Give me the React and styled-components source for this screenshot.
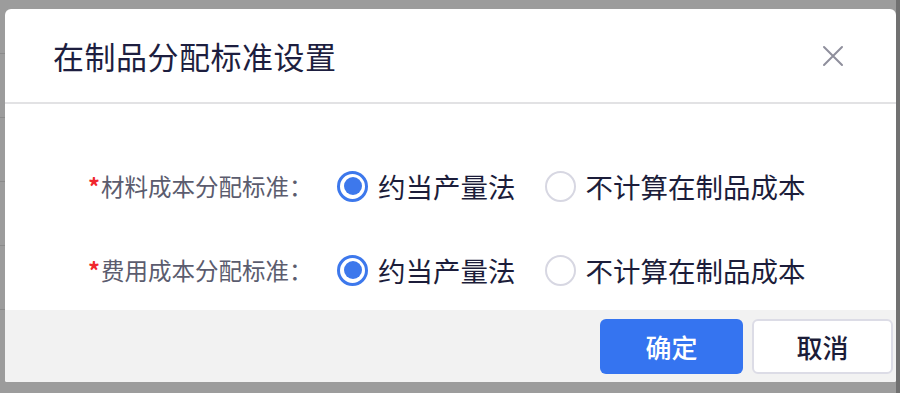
import React, { useState } from 'react'
import styled, { createGlobalStyle } from 'styled-components'

const GlobalStyle = createGlobalStyle`
  html, body {
    margin: 0;
    padding: 0;
  }
  body {
    font-family: "Noto Sans CJK SC", "Noto Sans", sans-serif;
  }
`;

const Page = styled.div`
  position: relative;
  width: 900px;
  height: 393px;
  overflow: hidden;
  display: flex;
  background: #9c9c9c;
`;

const Backdrop = styled.div`
  flex: 1;
  padding-top: 53px;
  display: flex;
  flex-direction: column;
`;

const BackRow = styled.div`
  height: 63px;
  border-top: 1px solid #8b8b8b;
`;

const ScrollStrip = styled.div`
  width: 4px;
  background: #717171;
`;

const Modal = styled.div`
  position: absolute;
  left: 5px;
  top: 9px;
  width: 891px;
  height: 373px;
  background: #fff;
  border-radius: 6px 6px 2px 2px;
  display: flex;
  flex-direction: column;
  overflow: hidden;
`;

const Header = styled.div`
  height: 93px;
  padding: 0 52px 0 48px;
  display: flex;
  align-items: center;
  justify-content: space-between;
  border-bottom: 2px solid #e2e2e4;
`;

const Title = styled.h2`
  margin: 0;
  font-size: 31px;
  font-weight: 400;
  color: #1d1e3f;
  letter-spacing: 0.5px;
`;

const CloseButton = styled.button`
  width: 22px;
  height: 22px;
  padding: 0;
  border: none;
  background: none;
  cursor: pointer;
  display: flex;
  align-items: center;
  justify-content: center;
`;

const Body = styled.div`
  flex: 1;
  padding: 62px 0 0 83px;
  display: flex;
  flex-direction: column;
  gap: 44px;
`;

const FormRow = styled.div`
  height: 40px;
  display: flex;
  align-items: center;
`;

const Label = styled.label`
  width: 249px;
  font-size: 23.5px;
  color: #5b5c6e;
  white-space: nowrap;
`;

const Required = styled.span`
  color: #f0262d;
  font-weight: 700;
  margin-right: 1px;
`;

const RadioGroup = styled.div`
  display: flex;
  align-items: center;
  gap: 29px;
`;

const RadioOption = styled.div`
  display: flex;
  align-items: center;
  gap: 10px;
  cursor: pointer;
`;

const Circle = styled.span`
  box-sizing: border-box;
  width: 31px;
  height: 31px;
  border-radius: 50%;
  border: ${p => (p.checked ? '3px solid #3d78ec' : '2px solid #d7d7e2')};
  display: flex;
  align-items: center;
  justify-content: center;

  &::after {
    content: '';
    width: 18px;
    height: 18px;
    border-radius: 50%;
    background: #3d78ec;
    display: ${p => (p.checked ? 'block' : 'none')};
  }
`;

const OptionText = styled.span`
  font-size: 27.5px;
  color: #1c1d3a;
  white-space: nowrap;
`;

const Footer = styled.div`
  height: 72px;
  background: #f2f2f2;
  display: flex;
  align-items: center;
  justify-content: flex-end;
  gap: 9px;
  padding-right: 3px;
`;

const Button = styled.button`
  box-sizing: border-box;
  width: ${p => (p.primary ? '143px' : '141px')};
  height: 55px;
  border-radius: 6px;
  font-family: "Noto Sans CJK SC", sans-serif;
  font-size: 26px;
  font-weight: 500;
  cursor: pointer;
  border: ${p => (p.primary ? 'none' : '2px solid #dcdce6')};
  background: ${p => (p.primary ? '#3574f0' : '#fff')};
  color: ${p => (p.primary ? '#fff' : '#1b1c38')};
`;

const Radio = ({ checked, label, onClick }) => (
  <RadioOption onClick={onClick}>
    <Circle checked={checked} />
    <OptionText>{label}</OptionText>
  </RadioOption>
);

const options = ['约当产量法', '不计算在制品成本'];

const Field = ({ label }) => {
  const [value, setValue] = useState(0);
  return (
    <FormRow>
      <Label>
        <Required>*</Required>
        {label}：
      </Label>
      <RadioGroup>
        {options.map((o, i) => (
          <Radio key={o} label={o} checked={value === i} onClick={() => setValue(i)} />
        ))}
      </RadioGroup>
    </FormRow>
  );
};

const App = () => {
  return (
    <>
      <GlobalStyle />
      <Page>
        <Backdrop>
          <BackRow />
          <BackRow />
          <BackRow />
          <BackRow />
          <BackRow />
        </Backdrop>
        <ScrollStrip />
        <Modal>
          <Header>
            <Title>在制品分配标准设置</Title>
            <CloseButton aria-label="关闭">
              <svg width="22" height="22" viewBox="0 0 22 22">
                <path d="M2 2 L20 20 M20 2 L2 20" stroke="#8f8f9c" strokeWidth="2" strokeLinecap="round" />
              </svg>
            </CloseButton>
          </Header>
          <Body>
            <Field label="材料成本分配标准" />
            <Field label="费用成本分配标准" />
          </Body>
          <Footer>
            <Button primary>确定</Button>
            <Button>取消</Button>
          </Footer>
        </Modal>
      </Page>
    </>
  )
}

export default App
